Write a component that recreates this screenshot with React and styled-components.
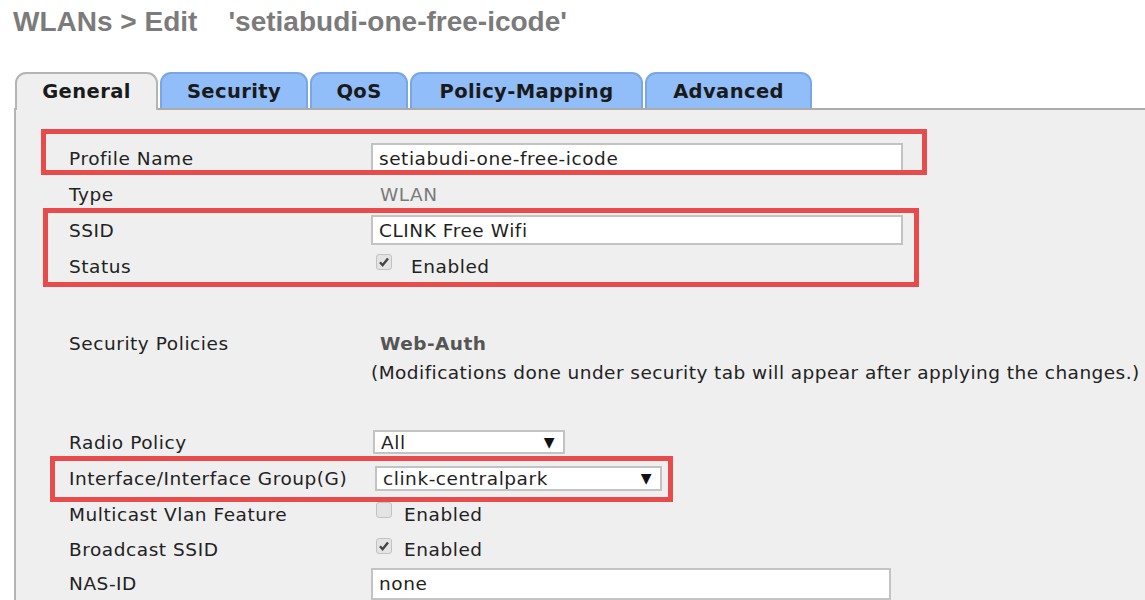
import React from "react"
import styled, { createGlobalStyle } from "styled-components"

const GlobalStyle = createGlobalStyle`
  body {
    margin: 0;
    background: #fff;
    font-family: "DejaVu Sans", Verdana, sans-serif;
    color: #222;
  }
`

const Page = styled.div`
  width: 1145px;
  height: 600px;
  overflow: hidden;
`

const Title = styled.h1`
  margin: 0;
  padding: 6px 0 0 13px;
  height: 72px;
  box-sizing: border-box;
  font-family: "Liberation Sans", Arial, sans-serif;
  font-size: 28px;
  line-height: 32px;
  font-weight: bold;
  color: #7b7b7b;
  white-space: pre;
`

const TabBar = styled.div`
  display: flex;
  gap: 2px;
  padding-left: 15px;
  height: 36px;
  position: relative;
  z-index: 1;
`

const Tab = styled.div`
  width: ${(p) => p.$w}px;
  height: ${(p) => (p.$active ? 38 : 36)}px;
  box-sizing: border-box;
  border: 2px solid ${(p) => (p.$active ? "#b4b4b4" : "#79a6e4")};
  border-bottom: none;
  border-radius: 11px 11px 0 0;
  background: ${(p) => (p.$active ? "#efefef" : "#91bdf8")};
  display: flex;
  justify-content: center;
  padding-top: 6px;
  font-size: 19.5px;
  letter-spacing: 0.4px;
  font-weight: bold;
  color: #1a1a1a;
`

const Panel = styled.div`
  position: relative;
  margin-left: 14px;
  border-top: 2px solid #ababab;
  border-left: 2px solid #b4b4b4;
  background: #efefef;
  height: 600px;
  padding-top: 30px;
  box-sizing: border-box;
`

const Row = styled.div`
  display: grid;
  grid-template-columns: 302px 1fr;
  align-items: center;
  height: ${(p) => p.$h || 36}px;
  padding-left: 53px;
`

const Label = styled.div`
  font-size: 18.5px;
  letter-spacing: 0.55px;
  color: #222;
  white-space: nowrap;
`

const Value = styled.div`
  display: flex;
  align-items: center;
  font-size: 18.5px;
  letter-spacing: 0.55px;
  color: ${(p) => p.$muted ? "#7a7a7a" : "#222"};
  padding-left: ${(p) => p.$indent || 0}px;
  white-space: nowrap;
`

const TextInput = styled.div`
  width: ${(p) => p.$w}px;
  height: ${(p) => p.$h || 30}px;
  box-sizing: border-box;
  border: 2px solid #c3c3c3;
  background: #fff;
  display: flex;
  align-items: center;
  padding-left: 6px;
  font-size: 18.5px;
  letter-spacing: 0.55px;
  color: #1f1f1f;
`

const Select = styled.div`
  width: ${(p) => p.$w}px;
  height: ${(p) => p.$h || 24}px;
  margin-left: ${(p) => p.$ml || 0}px;
  box-sizing: border-box;
  border: 2px solid #c3c3c3;
  background: #fff;
  display: flex;
  align-items: center;
  justify-content: space-between;
  padding: 0 8px 0 6px;
  font-size: 18.5px;
  letter-spacing: 0.55px;
  color: #1f1f1f;
`

const Arrow = styled.span`
  font-size: 14px;
  color: #111;
`

const Check = styled.span`
  width: 16px;
  height: 16px;
  box-sizing: border-box;
  border: 1px solid #c2c2c2;
  border-radius: 3px;
  background: #e4e4e4;
  margin: 0 ${(p) => p.$gap}px 0 5px;
  display: inline-flex;
  align-items: center;
  justify-content: center;
  position: relative;
  top: -4px;
`

const Strong = styled.span`
  font-weight: bold;
  color: #555;
  font-size: 18.5px;
  letter-spacing: 0.45px;
`

const Note = styled.div`
  font-size: 18.5px;
  letter-spacing: 0.45px;
  color: #222;
  white-space: nowrap;
`

const Highlight = styled.div`
  position: absolute;
  left: ${(p) => p.$x}px;
  top: ${(p) => p.$y}px;
  width: ${(p) => p.$w}px;
  height: ${(p) => p.$h}px;
  box-sizing: border-box;
  border: 5px solid #e84b4b;
  pointer-events: none;
`

function CheckBox({ checked, gap }) {
  return (
    <Check $gap={gap}>
      {checked && (
        <svg width="12" height="12" viewBox="0 0 12 12">
          <path d="M2 6.3 L4.6 9.2 L10 2.4" fill="none" stroke="#444" strokeWidth="2.4" />
        </svg>
      )}
    </Check>
  )
}

const tabs = [
  { name: "General", w: 143, active: true },
  { name: "Security", w: 148 },
  { name: "QoS", w: 98 },
  { name: "Policy-Mapping", w: 233 },
  { name: "Advanced", w: 167 },
]

export default function App() {
  return (
    <Page>
      <GlobalStyle />
      <Title>{"WLANs > Edit    'setiabudi-one-free-icode'"}</Title>
      <TabBar>
        {tabs.map((t) => (
          <Tab key={t.name} $w={t.w} $active={t.active}>{t.name}</Tab>
        ))}
      </TabBar>
      <Panel>
        <Row>
          <Label>Profile Name</Label>
          <Value><TextInput $w={532}>setiabudi-one-free-icode</TextInput></Value>
        </Row>
        <Row>
          <Label>Type</Label>
          <Value $muted $indent={9}>WLAN</Value>
        </Row>
        <Row>
          <Label>SSID</Label>
          <Value><TextInput $w={532}>CLINK Free Wifi</TextInput></Value>
        </Row>
        <Row>
          <Label>Status</Label>
          <Value><CheckBox checked gap={19} />Enabled</Value>
        </Row>
        <Row $h={41} />
        <Row>
          <Label>Security Policies</Label>
          <Value $indent={9}><Strong>Web-Auth</Strong></Value>
        </Row>
        <Row $h={22}>
          <span />
          <Note>(Modifications done under security tab will appear after applying the changes.)</Note>
        </Row>
        <Row $h={41} />
        <Row>
          <Label>Radio Policy</Label>
          <Value><Select $w={192} $ml={2}>All<Arrow>▼</Arrow></Select></Value>
        </Row>
        <Row>
          <Label>Interface/Interface Group(G)</Label>
          <Value><Select $w={287} $h={25} $ml={4}>clink-centralpark<Arrow>▼</Arrow></Select></Value>
        </Row>
        <Row>
          <Label>Multicast Vlan Feature</Label>
          <Value><CheckBox gap={12} />Enabled</Value>
        </Row>
        <Row $h={35}>
          <Label>Broadcast SSID</Label>
          <Value><CheckBox checked gap={12} />Enabled</Value>
        </Row>
        <Row $h={33}>
          <Label>NAS-ID</Label>
          <Value><TextInput $w={520} $h={32}>none</TextInput></Value>
        </Row>

        <Highlight $x={25} $y={19} $w={886} $h={46} />
        <Highlight $x={27} $y={98} $w={876} $h={79} />
        <Highlight $x={34} $y={346} $w={623} $h={46} />
      </Panel>
    </Page>
  )
}
